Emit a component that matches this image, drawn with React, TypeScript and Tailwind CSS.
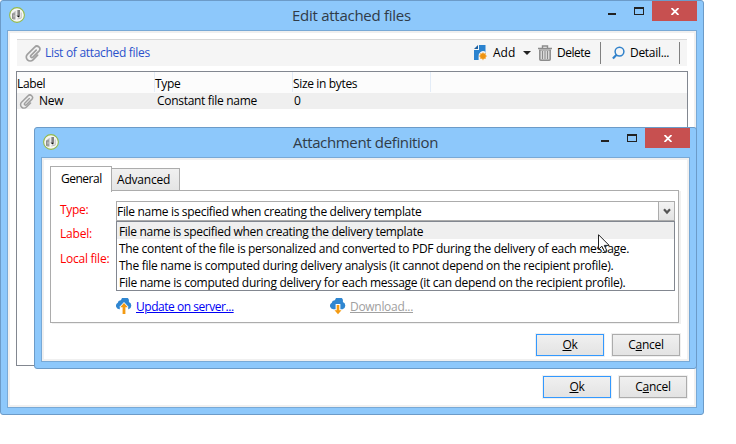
import type { ReactNode } from "react";

function AppLogo() {
  return (
    <svg width="16" height="16" viewBox="0 0 16 16" className="block">
      <circle cx="8" cy="8" r="7.4" fill="#f6f6f4" stroke="#93b94a" strokeWidth="1.1" />
      <path d="M3.2 6.6 6.6 3.8v8.6L3.2 12z" fill="#b4b4b4" />
      <path d="M3.6 6.6v5.2M5 6v2M5 10v2.6" stroke="#858585" strokeWidth="0.9" />
      <path d="M8.4 3v6" stroke="#9a9a9a" strokeWidth="0.9" />
      <path d="M10 3v6.8" stroke="#222" strokeWidth="1.1" />
      <path d="M7.4 8.7h2.8v2z" fill="#111" />
      <path d="M12.2 5.5v5.6L8.4 12" fill="none" stroke="#b0b0b0" strokeWidth="0.8" />
    </svg>
  );
}

function Clip({ className = "" }: { className?: string }) {
  return (
    <svg width="16" height="17" viewBox="0 0 16 17" className={"block " + className} fill="none" stroke="#a0a0a0" strokeWidth="1.7" strokeLinecap="round">
      <path d="M11.2 5.2 6 10.4a1.3 1.3 0 0 0 1.9 1.8L14 6.1a2.9 2.9 0 0 0-4.3-4L2.4 9.3a3.9 3.9 0 0 0 5.6 5.5l4.6-4.6" />
    </svg>
  );
}

function AddIcon() {
  return (
    <svg width="14" height="16" viewBox="0 0 14 16" className="block">
      <path d="M5 0h6.5v9H5zM0 5h5.5v10H0z" fill="#2b83cf" />
      <path d="M0 4 4 0v4z" fill="#1c5f9e" />
      <path d="M4.6 15V11.5A4.6 4.6 0 0 1 11.5 6.8V9l-3 6z" fill="#f5f5f5" />
      <path d="M9 6.9l1 1.6 1.9-.4-.3 1.9 1.7 1.1-1.7 1.1.3 1.9-1.9-.4-1 1.7-1.1-1.7-1.9.4.4-1.9-1.7-1.1 1.7-1.1L6 8.1l1.9.4z" fill="#f7b04e" />
      <circle cx="9" cy="11.1" r="2.7" fill="#ee9412" />
    </svg>
  );
}

function TrashIcon() {
  return (
    <svg width="14" height="16" viewBox="0 0 14 16" className="block" fill="none" stroke="#8c8c8c">
      <path d="M0 3.5h14M4.5 3V1h5v2" strokeWidth="1.4" />
      <path d="M1.8 5v9.2q0 1 1 1h8.4q1 0 1-1V5" fill="#d9d9d9" strokeWidth="1.5" />
      <path d="M4.5 6v8M7 6v8M9.5 6v8" strokeWidth="1" />
      <path d="M1 5h12" strokeWidth="1" />
    </svg>
  );
}

function SearchIcon() {
  return (
    <svg width="13" height="14" viewBox="0 0 13 14" className="block" fill="none" stroke="#3182cb">
      <circle cx="7.5" cy="5.6" r="4.4" strokeWidth="1.5" />
      <path d="M4.6 8.8.9 12.6" strokeWidth="2.2" />
    </svg>
  );
}

function CloudIcon({ up }: { up: boolean }) {
  return (
    <svg width="16" height="17" viewBox="0 0 16 17" className="block">
      <path
        d="M3.6 11.2A3.4 3.4 0 0 1 1.8 4.8 2.9 2.9 0 0 1 5 2.2 4 4 0 0 1 12.8 4 3.8 3.8 0 0 1 12.6 11.2z"
        fill="#2f86d1"
      />
      {up ? (
        <>
          <path d="M8 4 3.8 8.4V12h8.4V8.4z" fill="#fff" />
          <path d="M8 5 4.2 9.3h2.4V16h2.8V9.3h2.4z" fill="#f39a12" />
        </>
      ) : (
        <>
          <path d="M5.6 6h4.8v6.3H5.6z" fill="#fff" />
          <path d="M6.7 7v5.3H4.5L8 16.3l3.5-4H9.3V7z" fill="#f39a12" />
        </>
      )}
    </svg>
  );
}

function TitleBar({ title, text }: { title: string; text: string }) {
  return (
    <div className="flex h-[29px] items-start pl-2">
      <div className="mt-[6px] w-4">
        <AppLogo />
      </div>
      <span className={"grow text-[15px] leading-7 text-[#303b48] " + text}>{title}</span>
      <div className="mt-3 mr-[18px] h-[2px] w-2 bg-[#222]" />
      <div className="mt-[6px] mr-2 h-2 w-[10px] border border-t-2 border-[#222]" />
      <div className="mr-[6px] flex h-5 w-[45px] items-center justify-center bg-[#c75050]">
        <svg width="8" height="7" viewBox="0 0 8 7" className="mt-px block">
          <path d="M.5 0 7.5 7M7.5 0 .5 7" stroke="#fff" strokeWidth="1.8" />
        </svg>
      </div>
    </div>
  );
}

function Button({ primary, children }: { primary?: boolean; children: ReactNode }) {
  return (
    <button
      className={
        "h-[22px] w-[68px] border bg-linear-to-b from-[#f0f0f0] to-[#e3e3e3] leading-5 tracking-[-0.3px] shadow-[0_0_0_1px_#f0f0f0] " +
        (primary ? "border-[#3399ff]" : "border-[#acacac]")
      }
    >
      {children}
    </button>
  );
}

function Actions() {
  return (
    <div className="flex justify-end gap-2">
      <Button primary>
        <u>O</u>k
      </Button>
      <Button>
        C<u>a</u>ncel
      </Button>
    </div>
  );
}

const options = [
  { label: "File name is specified when creating the delivery template", track: "tracking-[-0.32px]" },
  { label: "The content of the file is personalized and converted to PDF during the delivery of each message.", track: "tracking-[-0.315px]" },
  { label: "The file name is computed during delivery analysis (it cannot depend on the recipient profile).", track: "tracking-[-0.28px]" },
  { label: "File name is computed during delivery for each message (it can depend on the recipient profile).", track: "tracking-[-0.29px]" },
];

function AttachmentDialog() {
  return (
    <div className="absolute top-[127px] left-[34px] h-[242px] w-[663px] rounded-[3px] border border-[#6c9bc8] bg-[#8dc8fb]">
      <TitleBar title="Attachment definition" text="pl-[234px] tracking-[-0.35px]" />
      <div className="mx-[6px] h-[205px] border border-[#78a9d6] bg-white">
        <div className="h-[203px] border-2 border-[#f0f0f0] px-[6px] pt-[6px]">
          <div className="flex h-[25px] items-end">
            <div className="z-10 -mb-px h-[26px] w-[62px] border border-b-0 border-[#acacac] bg-white pl-[10px] leading-[24px] tracking-[-0.5px]">General</div>
            <div className="-ml-px h-[23px] w-[69px] border border-[#acacac] bg-linear-to-b from-[#f0f0f0] to-[#e5e5e5] pl-[5px] leading-[21px] tracking-[-0.2px]">Advanced</div>
          </div>
          <div className="-mt-px h-[133px] w-[629px] border border-[#acacac] pt-[10px] pl-[9px] shadow-[2px_1px_0_#f0f0f0]">
            <div className="flex">
              <div className="w-14 text-[#ff0000]">
                <div className="h-6 leading-[18px] tracking-[-0.3px]">Type:</div>
                <div className="h-6 leading-[18px] tracking-[-0.2px]">Label:</div>
                <div className="mt-px h-6 leading-[18px] tracking-[-0.25px]">Local file:</div>
              </div>
              <div className="relative w-[559px]">
                <div className="flex h-5 border border-[#acacac]">
                  <span className="grow leading-[19px] tracking-[-0.315px]">File name is specified when creating the delivery template</span>
                  <span className="flex w-4 items-center justify-center border-l border-[#acacac] bg-linear-to-b from-[#f3f3f3] to-[#e3e3e3]">
                    <svg width="8" height="7" viewBox="0 0 8 7">
                      <path d="M1 1.3 4 4.6 7 1.3" fill="none" stroke="#555" strokeWidth="2.2" />
                    </svg>
                  </span>
                </div>
                <div className="absolute top-5 left-0 h-[70px] w-[559px] border border-[#828790] bg-white">
                  {options.map((o, i) => (
                    <div key={o.label} className={"h-[17px] pt-px pl-[2px] leading-[18px] whitespace-nowrap " + o.track + (i === 0 ? " bg-[#efefef]" : "")}>
                      {o.label}
                    </div>
                  ))}
                  <svg width="13" height="20" viewBox="0 0 13 20" className="absolute top-[12px] left-[481px]">
                    <path d="M.5.7v14.6l3.4-3.1 2.6 5.4 2.3-1-2.5-5.2h4.9z" fill="#fff" stroke="#222" strokeWidth="1" />
                  </svg>
                </div>
              </div>
            </div>
            <div className="mt-[24px] flex items-center pl-14">
              <CloudIcon up />
              <a className="ml-1 w-[194px] leading-4 tracking-[-0.46px] text-[#0000f5] underline">Update on server...</a>
              <CloudIcon up={false} />
              <a className="ml-1 leading-4 tracking-[-0.3px] text-[#a0a0a0] underline">Download...</a>
            </div>
          </div>
          <div className="mt-[11px] mr-px">
            <Actions />
          </div>
        </div>
      </div>
    </div>
  );
}

export default function App() {
  return (
    <div className="relative h-[444px] w-[736px] overflow-hidden bg-white font-['Open_Sans','Noto_Sans',sans-serif] text-[12px] text-black">
      <div className="h-[415px] w-[704px] rounded-[3px] border border-[#6c9bc8] bg-[#8dc8fb]">
        <TitleBar title="Edit attached files" text="pl-[267px] tracking-[-0.27px]" />
        <div className="mx-[6px] h-[378px] border border-[#78a9d6] bg-white">
          <div className="h-[376px] border-2 border-[#f0f0f0] px-[6px] pt-[6px]">
            <div className="ml-px flex h-[27px] w-[670px] items-center border-t border-[#d9d9d9] bg-[#f5f5f5] pl-2">
              <Clip />
              <span className="ml-1 grow tracking-[-0.3px] text-[#2b52cc]">List of attached files</span>
              <AddIcon />
              <span className="ml-[5px] w-[30px]">Add</span>
              <span className="mr-[7px] border-x-4 border-t-4 border-x-transparent border-t-[#222]" />
              <TrashIcon />
              <span className="ml-[5px] w-[43px] tracking-[-0.5px]">Delete</span>
              <span className="mr-[11px] h-[22px] w-px bg-[#808080]" />
              <SearchIcon />
              <span className="ml-[5px] w-[49px] tracking-[-0.3px]">Detail...</span>
              <span className="mr-[7px] h-[22px] w-px bg-[#808080]" />
            </div>
            <div className="mt-[5px] h-[295px] w-[672px] border border-[#828790]">
              <div className="flex h-[21px] bg-[#fcfcfc] leading-[23px] tracking-[-0.35px]">
                <div className="h-5 w-[138px] border-r border-[#e3ecf7]">Label</div>
                <div className="h-5 w-[138px] border-r border-[#e3ecf7]">Type</div>
                <div className="h-5 w-[138px] border-r border-[#e3ecf7]">Size in bytes</div>
              </div>
              <div className="flex h-4 items-center bg-[#efefef] leading-4 tracking-[-0.3px]">
                <Clip className="ml-[2px] h-[15px] w-[15px]" />
                <span className="ml-[5px] w-[118px]">New</span>
                <span className="w-[137px]">Constant file name</span>
                <span>0</span>
              </div>
            </div>
            <div className="mt-[10px] mr-px">
              <Actions />
            </div>
          </div>
        </div>
      </div>
      <AttachmentDialog />
    </div>
  );
}
